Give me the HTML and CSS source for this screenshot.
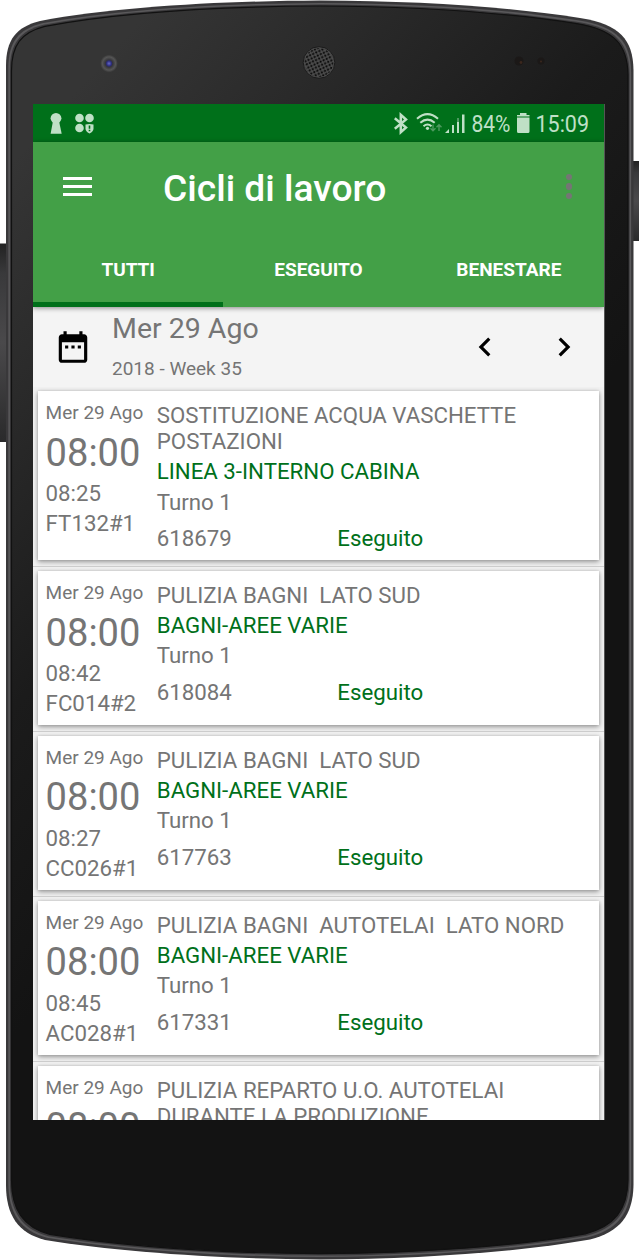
FILE: index.html
```html
<!DOCTYPE html>
<html lang="it">
<head>
    <meta charset="UTF-8">
    <meta name="viewport" content="width=device-width, initial-scale=1.0">
    <title>Cicli di lavoro</title>
    <link rel="stylesheet" href="styles.css">
</head>
<body>
    <div class="phone">
        <svg class="phone-frame" viewBox="0 0 640 1260">
            <defs>
                <linearGradient id="body" gradientUnits="userSpaceOnUse" x1="150" y1="0" x2="700" y2="500">
                    <stop offset="0" stop-color="#353535"/>
                    <stop offset=".2" stop-color="#2b2b2b"/>
                    <stop offset=".5" stop-color="#1b1b1b"/>
                    <stop offset=".8" stop-color="#131313"/>
                </linearGradient>
                <linearGradient id="key" x1="0" y1="0" x2="0" y2="1">
                    <stop offset="0" stop-color="#222"/>
                    <stop offset=".15" stop-color="#39393b"/>
                    <stop offset=".5" stop-color="#4a494b"/>
                    <stop offset="1" stop-color="#2a2a2b"/>
                </linearGradient>
                <radialGradient id="lens">
                    <stop offset="0" stop-color="#6668c8"/>
                    <stop offset=".3" stop-color="#2b2b78"/>
                    <stop offset=".42" stop-color="#35353a"/>
                    <stop offset=".75" stop-color="#555"/>
                    <stop offset="1" stop-color="#383838"/>
                </radialGradient>
                <pattern id="holes" width="4.8" height="4.8" patternUnits="userSpaceOnUse" patternTransform="rotate(20 319 62)">
                    <circle cx="1.2" cy="1.2" r="1.1" fill="#080808"/>
                    <circle cx="3.6" cy="3.6" r="1.1" fill="#080808"/>
                </pattern>
                <path id="shell" d="M6 66C6 40 16 27 40 21C120 6 230 1 320 .5C420 1 500 6 580 18C620 24 633 40 633.5 70V1185C633 1215 620 1232 590 1239.500C520 1252 420 1259 320 1259.500C220 1259 120 1252 45 1240C18 1233 6 1215 6 1185Z"/>
            </defs>
            <rect x="-3" y="243.500" width="10" height="198.500" rx="1" fill="url(#key)"/>
            <rect x="632" y="161" width="7" height="80" fill="url(#key)"/>
            <use href="#shell" fill="#39383a"/>
            <use href="#shell" fill="#5a595b" transform="translate(2.400 2.400) scale(.9925 .9962)"/>
            <use href="#shell" fill="#39383a" transform="translate(4 3.900) scale(.9875 .9938)"/>
            <use href="#shell" fill="url(#body)" stroke="#111" stroke-width="1.200" transform="translate(5.600 5.500) scale(.9825 .991)"/>
            <circle cx="109" cy="63.500" r="8.700" fill="url(#lens)"/>
            <circle cx="319" cy="62.500" r="15.800" fill="#4c4c4c" stroke="#1a1a1a"/>
            <circle cx="319" cy="62.500" r="14.500" fill="url(#holes)"/>
            <circle cx="519" cy="61" r="4.500" fill="#1b1817"/>
            <circle cx="521" cy="62.500" r="1.400" fill="#3b271d"/>
            <circle cx="541" cy="61" r="3.500" fill="#1b1817"/>
            <circle cx="541" cy="61.500" r="1.100" fill="#38261d"/>
        </svg>

        <div class="screen">
            <div class="status-bar">
                <svg width="571" height="38" viewBox="33 104 571 38" fill="#bfe0c6">
                    <!-- keyhole -->
                    <circle cx="56" cy="118.300" r="5.400"/>
                    <path d="M53 121h6l2.700 12.700H50.600z"/>
                    <!-- secure apps -->
                    <circle cx="79.500" cy="118" r="4.300"/>
                    <circle cx="89.500" cy="118" r="4.300"/>
                    <circle cx="79.500" cy="128" r="4.300"/>
                    <path d="M85.500 124.500q4-1 8 0v4q0 3-4 5q-4-2-4-5z"/>
                    <path d="M88.700 125.500h1.600v3.200h-1.600zM88.700 129.700h1.600v1.500h-1.600z" fill="#00701a"/>
                    <!-- bluetooth -->
                    <path d="M394.800 118.200l11.200 9.300l-5.200 4.700v-17.400l5.200 4.700l-11.200 9.300" fill="none" stroke="#bfe0c6" stroke-width="2.500"/>
                    <!-- wifi -->
                    <g fill="none" stroke="#bfe0c6" stroke-width="2">
                        <path d="M417 118.800Q427.500 109.500 438 118.800"/>
                        <path d="M420.300 122.800Q427.500 116.500 434.700 122.800"/>
                        <path d="M423.500 126.300Q427.500 122.800 431.500 126.300"/>
                    </g>
                    <circle cx="427.500" cy="128.300" r="1.600"/>
                    <path d="M433 124.500v6m-2.500-2.200l2.500 2.500l2.500-2.500M439 131v-6m-2.500 2.200l2.500-2.500l2.500 2.500" fill="none" stroke="#4e9a60" stroke-width="1.400"/>
                    <!-- signal -->
                    <path d="M445 133l4-4v4zM452 125h2v8h-2zM457 121.500h2v11.500h-2zM462 114.500h2.500V133H462z"/>
                    <path d="M457 118h2v4h-2z" fill="#4e9a60"/>
                    <text class="status-text" x="471.500" y="131.800" textLength="39" lengthAdjust="spacingAndGlyphs">84%</text>
                    <!-- battery -->
                    <path d="M520 113h6.500v2H529.500v1.400H517V115h3zM517 117.400h12.500V131.500q0 1.500-1.500 1.500H518.500q-1.500 0-1.500-1.500z"/>
                    <text class="status-text" x="535.500" y="131.800" textLength="53.500" lengthAdjust="spacingAndGlyphs">15:09</text>
                </svg>
            </div>

            <div class="app-bar">
                <div class="toolbar">
                    <div class="menu-btn"><span></span><span></span><span></span></div>
                    <h1>Cicli di lavoro</h1>
                    <div class="more-btn"><span></span><span></span><span></span></div>
                </div>
                <div class="tabs">
                    <div class="tab active">TUTTI</div>
                    <div class="tab">ESEGUITO</div>
                    <div class="tab">BENESTARE</div>
                </div>
            </div>

            <div class="date-bar">
                <svg class="icon" viewBox="0 0 24 24"><path d="M9 11H7v2h2v-2zm4 0h-2v2h2v-2zm4 0h-2v2h2v-2zm2-7h-1V2h-2v2H8V2H6v2H5c-1.110 0-1.990.9-1.990 2L3 20c0 1.100.890 2 2 2h14c1.100 0 2-.9 2-2V6c0-1.100-.9-2-2-2zm0 16H5V9h14v11z"/></svg>
                <div class="date-text">
                    <div class="day">Mer 29 Ago</div>
                    <div class="week">2018 - Week 35</div>
                </div>
                <div class="arrows">
                    <svg class="icon" viewBox="0 0 24 24"><path d="M15.410 7.410L14 6l-6 6 6 6 1.410-1.410L10.830 12z"/></svg>
                    <svg class="icon" viewBox="0 0 24 24"><path d="M10 6L8.590 7.410 13.170 12l-4.580 4.590L10 18l6-6z"/></svg>
                </div>
            </div>

            <div class="list">
                <div class="item">
                    <div class="card">
                        <div class="when">
                            <div class="date">Mer 29 Ago</div>
                            <div class="time">08:00</div>
                            <div class="end">08:25</div>
                            <div class="code">FT132#1</div>
                        </div>
                        <div class="what">
                            <div class="name">SOSTITUZIONE ACQUA VASCHETTE POSTAZIONI</div>
                            <div class="place">LINEA 3-INTERNO CABINA</div>
                            <div class="shift">Turno 1</div>
                            <div class="state"><span>618679</span><span class="done">Eseguito</span></div>
                        </div>
                    </div>
                </div>
                <div class="item">
                    <div class="card">
                        <div class="when">
                            <div class="date">Mer 29 Ago</div>
                            <div class="time">08:00</div>
                            <div class="end">08:42</div>
                            <div class="code">FC014#2</div>
                        </div>
                        <div class="what">
                            <div class="name">PULIZIA BAGNI  LATO SUD</div>
                            <div class="place">BAGNI-AREE VARIE</div>
                            <div class="shift">Turno 1</div>
                            <div class="state"><span>618084</span><span class="done">Eseguito</span></div>
                        </div>
                    </div>
                </div>
                <div class="item">
                    <div class="card">
                        <div class="when">
                            <div class="date">Mer 29 Ago</div>
                            <div class="time">08:00</div>
                            <div class="end">08:27</div>
                            <div class="code">CC026#1</div>
                        </div>
                        <div class="what">
                            <div class="name">PULIZIA BAGNI  LATO SUD</div>
                            <div class="place">BAGNI-AREE VARIE</div>
                            <div class="shift">Turno 1</div>
                            <div class="state"><span>617763</span><span class="done">Eseguito</span></div>
                        </div>
                    </div>
                </div>
                <div class="item">
                    <div class="card">
                        <div class="when">
                            <div class="date">Mer 29 Ago</div>
                            <div class="time">08:00</div>
                            <div class="end">08:45</div>
                            <div class="code">AC028#1</div>
                        </div>
                        <div class="what">
                            <div class="name">PULIZIA BAGNI  AUTOTELAI  LATO NORD</div>
                            <div class="place">BAGNI-AREE VARIE</div>
                            <div class="shift">Turno 1</div>
                            <div class="state"><span>617331</span><span class="done">Eseguito</span></div>
                        </div>
                    </div>
                </div>
                <div class="item">
                    <div class="card">
                        <div class="when">
                            <div class="date">Mer 29 Ago</div>
                            <div class="time">08:00</div>
                        </div>
                        <div class="what">
                            <div class="name">PULIZIA REPARTO U.O. AUTOTELAI DURANTE LA PRODUZIONE</div>
                        </div>
                    </div>
                </div>
            </div>
        </div>
    </div>
</body>
</html>
```
FILE: styles.css
```css
* {
    padding: 0;
    margin: 0;
    box-sizing: border-box;
}
body {
    background: #ffffff;
    font-family: Roboto, "Liberation Sans", sans-serif;
    color: #757575;
    overflow: hidden;
}
.phone {
    position: relative;
    width: 640px;
    height: 1260px;
    padding: 104px 35px 140px 33px;
}
.phone-frame {
    position: absolute;
    top: 0;
    left: 0;
    width: 640px;
    height: 1260px;
}
.screen {
    position: relative;
    display: flex;
    flex-direction: column;
    width: 572px;
    height: 1016px;
    border-right: 1px solid #555555;
    background: #f1f1f1;
    overflow: hidden;
}

/* status bar */
.status-bar {
    flex: none;
    height: 38px;
    background: #00701a;
}
.status-bar svg {
    display: block;
}
.status-text {
    font-size: 23.5px;
}

/* app bar */
.app-bar {
    position: relative;
    z-index: 1;
    flex: none;
    height: 165px;
    background: #43a047;
    color: #ffffff;
    box-shadow: 0 1px 5px rgba(0, 0, 0, 0.45);
}
.toolbar {
    display: flex;
    align-items: center;
    height: 89px;
    padding: 0 32px 0 30px;
}
.menu-btn {
    display: flex;
    flex-direction: column;
    gap: 5px;
    width: 29px;
}
.menu-btn span {
    height: 3px;
    background: #ffffff;
}
.toolbar h1 {
    margin-left: 71px;
    padding-top: 3px;
    font-size: 37.2px;
    font-weight: 500;
    white-space: nowrap;
}
.more-btn {
    display: flex;
    flex-direction: column;
    gap: 3.2px;
    margin-left: auto;
}
.more-btn span {
    width: 6.4px;
    height: 6.4px;
    border-radius: 50%;
    background: #757575;
}
.tabs {
    display: flex;
    height: 76px;
}
.tab {
    flex: 1;
    padding-top: 28px;
    font-size: 19px;
    line-height: 22px;
    font-weight: 700;
    text-align: center;
}
.tab.active {
    border-bottom: 5px solid #00701a;
}

/* selected day */
.date-bar {
    display: flex;
    align-items: center;
    flex: none;
    height: 80px;
    padding: 0 21px;
    background: #f4f4f4;
}
.icon {
    display: block;
    width: 38px;
    height: 38px;
    fill: #000000;
}
.date-text {
    margin: -2px 0 0 20px;
}
.day {
    font-size: 28.5px;
    line-height: 33.5px;
}
.week {
    margin-top: 12.5px;
    font-size: 19px;
    line-height: 22px;
}
.arrows {
    display: flex;
    gap: 41.5px;
    margin-left: auto;
}

/* work cycles */
.item {
    padding: 4.3px 5px 5.4px;
    border-bottom: 1px solid #cfcfcf;
}
.card {
    display: flex;
    padding: 11px 8px 9.2px 7.6px;
    background: #ffffff;
    box-shadow: 0 2px 5px rgba(0, 0, 0, 0.35), 0 0 3px rgba(0, 0, 0, 0.15);
    font-size: 22.25px;
    line-height: 26px;
}
.when {
    flex: none;
    width: 111.2px;
}
.date {
    font-size: 19px;
    line-height: 22.3px;
}
.time {
    margin: 6.2px 0 5px;
    font-size: 38.1px;
    line-height: 44.6px;
}
.code {
    margin-top: 4px;
}
.what {
    flex: 1;
}
.name {
    white-space: pre-wrap;
}
.place {
    margin: 4.2px 0;
    color: #00701a;
}
.state {
    display: flex;
    margin-top: 10.5px;
}
.state span {
    flex: none;
    width: 180.5px;
}
.state .done {
    color: #00701a;
}
```
